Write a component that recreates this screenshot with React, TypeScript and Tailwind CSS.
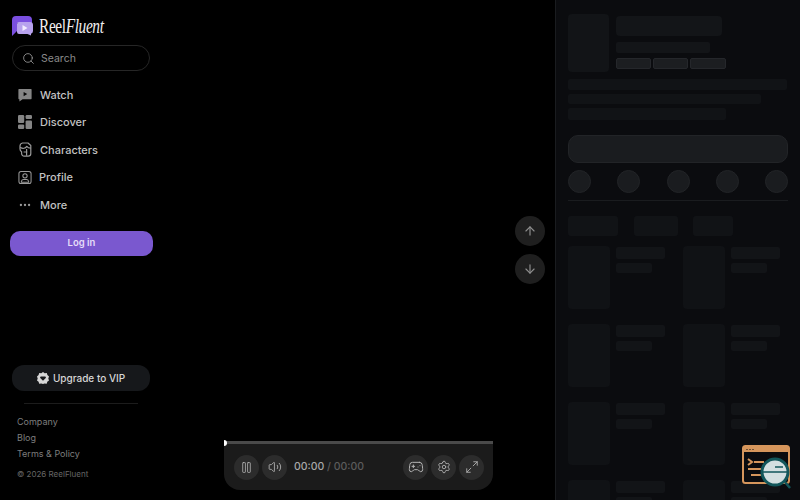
import React from "react";
import {
  ArrowDown,
  ArrowUp,
  Ellipsis,
  Gamepad2,
  Maximize2,
  Pause,
  Search,
  Settings,
  Volume2,
} from "lucide-react";

function LogoMark() {
  return (
    <svg width="21" height="20" viewBox="0 0 21 20">
      <path d="M4 0h12a4 4 0 0 1 4 4v3H5v8l-5 5V4a4 4 0 0 1 4-4z" fill="#7a4fe0" />
      <path d="M7 6h11a3 3 0 0 1 3 3v6a3 3 0 0 1-2 2.800V19.500L15.500 18H7a2 2 0 0 1-2-2V8a2 2 0 0 1 2-2z" fill="#b8a2ee" />
      <path d="M10.500 9l5 3-5 3z" fill="#f3edff" />
    </svg>
  );
}

function WatchIcon() {
  return (
    <svg width="14" height="14" viewBox="0 0 14 14">
      <path d="M1 1h12a.6.6 0 0 1 .6.6v9a.6.6 0 0 1-.6.6H4.600L1.400 13.600V11.200H1a.6.6 0 0 1-.6-.6v-9A.6.6 0 0 1 1 1z" fill="#858585" />
      <path d="M5.600 4l3.600 2.100-3.600 2.100z" fill="#050505" />
    </svg>
  );
}

function DiscoverIcon() {
  return (
    <svg width="14" height="14" viewBox="0 0 14 14" fill="#858585">
      <rect x="0" y="0" width="6.200" height="8" rx="1.200" />
      <rect x="7.600" y="0" width="6.400" height="4" rx="1.200" />
      <rect x="7.600" y="5.400" width="6.400" height="8.600" rx="1.200" />
      <rect x="0" y="9.400" width="6.200" height="4.600" rx="1.200" />
    </svg>
  );
}

function CharactersIcon() {
  return (
    <svg width="13" height="15" viewBox="0 0 13 15" fill="none" stroke="#9a9a9a" strokeWidth="1.200" strokeLinejoin="round">
      <path d="M3.500 1h5.500l2.800 2.500v8a2.600 2.600 0 0 1-2.600 2.600H5.200a2.600 2.600 0 0 1-2.600-2.600V9.800A3.400 3.400 0 0 1 1 7V4A3.200 3.200 0 0 1 3.500 1z" />
      <path d="M1.200 5.200c2.500 1.800 5.400 1.200 6.600-.8.800 1.200 2 1.800 4 1.800" />
      <path d="M4.600 10h3.800M7.600 7v6.800" />
    </svg>
  );
}

function ProfileIcon() {
  return (
    <svg width="15" height="15" viewBox="0 0 15 15" fill="none" stroke="#9a9a9a" strokeWidth="1.100">
      <rect x="1" y="1" width="13" height="13" rx="2.200" />
      <circle cx="7.500" cy="5.700" r="2.300" />
      <path d="M3.600 11.600c.4-1.400 1.400-2 2.400-2h3c1 0 2 .6 2.400 2v.9H3.600z" />
    </svg>
  );
}

function VipIcon() {
  return (
    <svg width="12" height="12" viewBox="0 0 12 12">
      <path d="M6 0l1.700 1.200 2.100-.1.600 2 1.600 1.400-.7 2 .7 2-1.700 1.200-.6 2-2.100-.1L6 12l-1.700-.4-2.100.1-.6-2L0 8.500l.7-2-.7-2 1.600-1.400.6-2 2.100.1z" fill="#d6d6d6" />
      <path d="M3.600 4.600h4.800L9 5.800 6 8.800 3 5.800z" fill="#17191c" />
    </svg>
  );
}

function Widget() {
  return (
    <svg width="50" height="44" viewBox="0 0 50 44" fill="none">
      <rect x="1" y="1" width="46" height="37" rx="2.500" fill="#0b0c0f" stroke="#d6965c" strokeWidth="2" />
      <rect x="2" y="2" width="44" height="5" fill="#d6965c" />
      <path d="M4.500 4.500h1M7.500 4.500h1M10.500 4.500h1" stroke="#0b0c0f" strokeWidth="1.200" />
      <path d="M6 14l4 3-4 3M12 17h10M6 24h16M9 30h12" stroke="#d6965c" strokeWidth="2" />
      <circle cx="33" cy="27" r="13" fill="#d3dfe0" stroke="#12565a" strokeWidth="3" />
      <path d="M21 27h24M33 22h8" stroke="#12565a" strokeWidth="1.500" />
      <path d="M43 37l5 6" stroke="#12565a" strokeWidth="2.500" />
    </svg>
  );
}

const navItems = [
  { label: "Watch", icon: <WatchIcon />, gap: "gap-[8px]" },
  { label: "Discover", icon: <DiscoverIcon />, gap: "gap-[8px]" },
  { label: "Characters", icon: <CharactersIcon />, gap: "gap-[8px]" },
  { label: "Profile", icon: <ProfileIcon />, gap: "gap-[7px]" },
  {
    label: "More",
    icon: <Ellipsis size={14} strokeWidth={2} className="text-[#9a9a9a]" />,
    gap: "gap-[8px]",
  },
];

function Sidebar() {
  return (
    <aside className="w-[162px] h-full shrink-0 flex flex-col pl-[12px] pr-[12px] pt-[15px]">
      <div className="flex items-center gap-[6px] h-[21px] text-[#f0eeee]">
        <LogoMark />
        <span className="origin-left scale-x-[0.77] text-[20px] tracking-[-0.5px] font-['Liberation_Serif',serif]">
          Reel<span className="italic">Fluent</span>
        </span>
      </div>

      <div className="mt-[9px] h-[26px] w-[138px] rounded-full border border-[#262626] flex items-center pl-[9px] gap-[6px]">
        <Search size={13} strokeWidth={1.500} className="text-[#a0a0a0]" />
        <span className="pt-px text-[10.500px] text-[#8a8a8a]">Search</span>
      </div>

      <nav className="mt-[10px] -ml-[12px] flex flex-col">
        {navItems.map((item) => (
          <div
            key={item.label}
            className={`h-[27.500px] flex items-center pl-[18px] ${item.gap} text-[11px] font-medium text-[#c2c2c2]`}
          >
            <span className="w-[14px] flex justify-center">{item.icon}</span>
            {item.label}
          </div>
        ))}
      </nav>

      <button className="mt-[12px] -ml-[2px] h-[25px] w-[143px] pt-px rounded-[10px] bg-[#7a58cf] text-[9.500px] font-semibold text-[#e6def9]">
        Log in
      </button>

      <div className="mt-auto">
        <div className="h-[26px] w-[138px] rounded-[12px] bg-[#16181b] flex items-center justify-center gap-[4px] text-[10px] font-medium text-[#d6d6d6]">
          <VipIcon />
          Upgrade to VIP
        </div>
        <div className="mt-[12px] mx-[12px] h-px bg-[#1c1c1c]" />
        <div className="mt-[12px] pl-[5px] flex flex-col gap-[4px] text-[9px] leading-[12px] text-[#7d7d7d]">
          <span>Company</span>
          <span>Blog</span>
          <span>Terms &amp; Policy</span>
        </div>
        <p className="mt-[9px] mb-[21px] pl-[5px] text-[8px] leading-[10px] text-[#666666]">
          © 2026 ReelFluent
        </p>
      </div>
    </aside>
  );
}

function RoundButton({ children }: { children: React.ReactNode }) {
  return (
    <div className="w-[25px] h-[25px] rounded-full bg-[#2c2c2c] flex items-center justify-center text-[#b4b4b4]">
      {children}
    </div>
  );
}

function Player() {
  return (
    <main className="relative flex-1 h-full">
      <div className="absolute left-[353px] top-[216px] flex flex-col gap-[8px]">
        <div className="w-[30px] h-[30px] rounded-full bg-[#1f1f1f] flex items-center justify-center">
          <ArrowUp size={14} className="text-[#8e8e8e]" />
        </div>
        <div className="w-[30px] h-[30px] rounded-full bg-[#1f1f1f] flex items-center justify-center">
          <ArrowDown size={14} className="text-[#8e8e8e]" />
        </div>
      </div>

      <div className="absolute left-[62px] top-[441px] w-[269px]">
        <div className="relative h-[3px] bg-[#4a4a4a]">
          <div className="absolute left-0 -top-[1px] w-[3px] h-[6px] rounded-r-full bg-white" />
        </div>
        <div className="h-[46px] rounded-b-[16px] bg-[#1b1b1b] flex items-center pl-[10px] pr-[9px]">
          <div className="flex gap-[3px]">
            <RoundButton>
              <Pause size={13} strokeWidth={1.500} />
            </RoundButton>
            <RoundButton>
              <Volume2 size={14} strokeWidth={1.500} />
            </RoundButton>
          </div>
          <span className="ml-[7px] text-[10.500px] font-medium text-[#a8a8a8]">
            00:00 <span className="text-[#5c5c5c]">/ 00:00</span>
          </span>
          <div className="ml-auto flex gap-[3px]">
            <RoundButton>
              <Gamepad2 size={16} strokeWidth={1.500} />
            </RoundButton>
            <RoundButton>
              <Settings size={14} strokeWidth={1.500} />
            </RoundButton>
            <RoundButton>
              <Maximize2 size={14} strokeWidth={1.500} />
            </RoundButton>
          </div>
        </div>
      </div>
    </main>
  );
}

function EpisodeRow() {
  return (
    <div className="flex gap-[6px] h-[63px]">
      <div className="w-[42px] h-full shrink-0 rounded-[4px] bg-[#101215]" />
      <div className="flex-1 pt-[1px]">
        <div className="h-[12px] w-[49px] rounded-[2px] bg-[#121417]" />
        <div className="mt-[4px] h-[10px] w-[36px] rounded-[2px] bg-[#121417]" />
      </div>
    </div>
  );
}

function SidePanel() {
  return (
    <aside className="relative w-[245px] h-full shrink-0 border-l border-[#1a1c1f] bg-[#0b0c0f] overflow-hidden pl-[12px] pr-[12px] pt-[14px]">
      <div className="flex gap-[7px]">
        <div className="w-[41px] h-[58px] rounded-[4px] bg-[#121417]" />
        <div className="pt-[2px]">
          <div className="w-[106px] h-[20px] rounded-[4px] bg-[#131518]" />
          <div className="mt-[6px] w-[94px] h-[11px] rounded-[2px] bg-[#131518]" />
          <div className="mt-[5px] flex gap-[2px]">
            <div className="w-[35px] h-[11px] rounded-[2px] border border-[#25272b] bg-[#1c1e21]" />
            <div className="w-[35px] h-[11px] rounded-[2px] border border-[#25272b] bg-[#1c1e21]" />
            <div className="w-[36px] h-[11px] rounded-[2px] border border-[#25272b] bg-[#1c1e21]" />
          </div>
        </div>
      </div>

      <div className="mt-[7px] flex flex-col gap-[4px]">
        <div className="h-[11px] w-[219px] rounded-[2px] bg-[#111316]" />
        <div className="h-[10px] w-[193px] rounded-[2px] bg-[#111316]" />
        <div className="h-[12px] w-[158px] rounded-[2px] bg-[#111316]" />
      </div>

      <div className="mt-[15px] h-[28px] w-[220px] rounded-[10px] border border-[#222427] bg-[#1a1c1f]" />

      <div className="mt-[7px] w-[220px] flex justify-between">
        {[0, 1, 2, 3, 4].map((i) => (
          <div key={i} className="w-[23px] h-[23px] rounded-full border border-[#222427] bg-[#1a1c1f]" />
        ))}
      </div>

      <div className="mt-[7px] w-[220px] h-px bg-[#1a1c1f]" />

      <div className="mt-[15px] flex h-[20px]">
        <div className="w-[50px] rounded-[3px] bg-[#111316]" />
        <div className="ml-[16px] w-[44px] rounded-[3px] bg-[#111316]" />
        <div className="ml-[15px] w-[40px] rounded-[3px] bg-[#111316]" />
      </div>

      <div className="mt-[10px] grid grid-cols-[115px_105px] gap-y-[15px]">
        {[0, 1, 2, 3, 4, 5, 6, 7].map((i) => (
          <EpisodeRow key={i} />
        ))}
      </div>

      <div className="absolute left-[186px] top-[445px]">
        <Widget />
      </div>
    </aside>
  );
}

export default function App() {
  return (
    <div className="w-[800px] h-[500px] overflow-hidden flex bg-black font-['Inter',sans-serif]">
      <Sidebar />
      <Player />
      <SidePanel />
    </div>
  );
}
